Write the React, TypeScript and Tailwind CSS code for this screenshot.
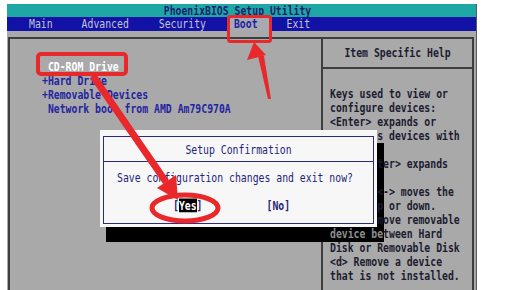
// Phoenix BIOS boot tab with save confirmation dialog and red annotations

// help lines as seen: the parts under the dialog are blank
const helpLines: React.ReactNode[] = [
  'Keys used to view or',
  'configure devices:',
  '<Enter> expands or',
  '        s devices with',
  ' ',
  '        ter> expands',
  '  ',
  '        <-> moves the',
  '        p or down.',
  '        move removable',
  <><span className="text-[#8e8e8e]">device be</span>tween Hard</>,
  'Disk or Removable Disk',
  '<d> Remove a device',
  'that is not installed.'
]

const Line: React.FC<{ children: React.ReactNode; className?: string }> = ({ children, className }) => (
  <div className={`h-[14px] leading-[14px] whitespace-pre scale-y-125 ${className ?? ''}`}>{children}</div>
)

const Annotations = () => (
  <svg className="absolute inset-0 z-30 pointer-events-none" width={517} height={290} viewBox="0 0 517 290">
    {/* box round the Boot tab */}
    <rect x={228.5} y={16.5} width={42} height={25} rx={2} fill="none" stroke="#e8282a" strokeWidth={3} />
    {/* arrow pointing up to Boot */}
    <polygon points="258,56 264,56 271,99 268,99" fill="#e8282a" />
    <polygon points="254,42 247,60 266,55" fill="#e8282a" />
    {/* box round CD-ROM Drive */}
    <rect x={38} y={54} width={88} height={20} rx={3} fill="none" stroke="#e8282a" strokeWidth={4} />
    {/* arrow from CD-ROM Drive to Yes */}
    <line x1={93} y1={76} x2={166} y2={182} stroke="#e8282a" strokeWidth={7} />
    <polygon points="178,200 157,188 176,175" fill="#e8282a" />
    {/* ellipse round Yes */}
    <ellipse cx={185} cy={208} rx={33} ry={13} fill="none" stroke="#e8282a" strokeWidth={5} />
  </svg>
)

export default function App() {
  return (
    <div className="relative w-[517px] h-[290px] overflow-hidden bg-white font-['DejaVu_Sans_Mono',monospace] text-[9.8px] font-bold">
      <div className="ml-[7px] mt-[4px] w-[470px] h-[286px] flex flex-col bg-[#a9a9a9] border-r border-[#5a5a5a]">
        {/* title bar */}
        <div className="h-[13px] bg-[#1fa7a5] flex items-center justify-center pr-[8px] text-[#1c1f70]">
          <Line>PhoenixBIOS Setup Utility</Line>
        </div>

        {/* menu bar */}
        <div className="h-[14px] bg-[#1212a6] flex items-center text-[#c4c4d4] font-normal">
          <span className="ml-[22px]"><Line>Main</Line></span>
          <span className="ml-[29px]"><Line>Advanced</Line></span>
          <span className="ml-[30px]"><Line>Security</Line></span>
          <span className="ml-[21px] h-full pl-[7px] pr-[12px] bg-[#a9a9b1] text-[#2222a0] flex items-center font-bold"><Line>Boot</Line></span>
          <span className="ml-[17px]"><Line>Exit</Line></span>
        </div>

        {/* body */}
        <div className="flex-1 pt-[6px] pl-[1px] pr-[2px]">
          <div className="h-full grid grid-cols-[311px_1fr] border-t-2 border-l-2 border-r-2 border-[#3e3e3e]">
            {/* boot order list */}
            <div className="pt-[21px] pl-[32px] text-[#2424a0]">
              <Line className="text-white"> CD-ROM Drive</Line>
              <Line>+Hard Drive</Line>
              <Line>+Removable Devices</Line>
              <Line> Network boot from AMD Am79C970A</Line>
            </div>

            {/* help panel */}
            <div className="border-l-2 border-[#3e3e3e] flex flex-col">
              <div className="h-[30px] border-b-2 border-[#3e3e3e] flex items-center justify-center text-[#1c1c30]">
                <Line>Item Specific Help</Line>
              </div>
              <div className="relative z-10 pt-[18px] pl-[7px] text-[#1c1c30]">
                {helpLines.map((l, i) => (
                  <Line key={i}>{l}</Line>
                ))}
              </div>
            </div>
          </div>
        </div>
      </div>

      {/* dialog shadow, drawn under the help text */}
      <div className="absolute z-0 left-[106px] top-[143px] w-[278px] h-[99px] bg-black" />

      {/* confirmation dialog */}
      <div className="absolute z-20 left-[100px] top-[130px] w-[277px] h-[97px] bg-[#f7f7f7] pt-[6px] px-[3px] pb-[3px] text-[#25257a]">
        <div className="h-full border border-[#2b2b7c] flex flex-col">
          <div className="h-[25px] pt-[2px] border-b border-[#2b2b7c] flex items-center justify-center font-normal">
            <Line>Setup Confirmation</Line>
          </div>
          <div className="pt-[9px] pl-[13px] font-normal">
            <Line>Save configuration changes and exit now?</Line>
            <div className="mt-[14px] pl-[56px] flex font-bold">
              <Line>[<span className="bg-black text-white">Yes</span>]</Line>
              <span className="ml-[64px]"><Line>[No]</Line></span>
            </div>
          </div>
        </div>
      </div>

      <Annotations />
    </div>
  )
}
